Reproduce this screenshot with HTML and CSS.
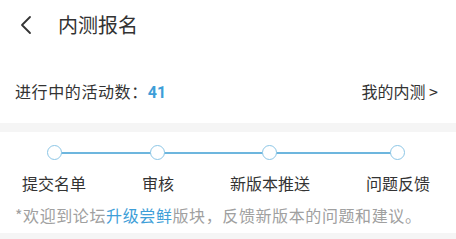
FILE: index.html
```html
<!DOCTYPE html>
<html lang="zh-CN">
<head>
    <meta charset="UTF-8">
    <meta name="viewport" content="width=device-width, initial-scale=1.0">
    <title>内测报名</title>
    <link rel="stylesheet" href="styles.css">
</head>
<body>
    <div class="page">
        <div class="top-bar">
            <svg class="back-icon" width="14" height="20" viewBox="0 0 14 20">
                <path d="M11 2 L3 10 L11 18" fill="none" stroke="#333" stroke-width="1.8" stroke-linecap="round" stroke-linejoin="round"/>
            </svg>
            <h1>内测报名</h1>
        </div>

        <div class="stats-row">
            <span class="stats-label">进行中的活动数：<b class="stats-count">41</b></span>
            <span class="my-tests">我的内测 &gt;</span>
        </div>

        <div class="divider"></div>

        <div class="steps-panel">
            <div class="steps">
                <div class="step">
                    <span class="step-dot"></span>
                    <span class="step-name">提交名单</span>
                </div>
                <div class="step">
                    <span class="step-dot"></span>
                    <span class="step-name">审核</span>
                </div>
                <div class="step">
                    <span class="step-dot"></span>
                    <span class="step-name">新版本推送</span>
                </div>
                <div class="step">
                    <span class="step-dot"></span>
                    <span class="step-name">问题反馈</span>
                </div>
            </div>
            <p class="note">*欢迎到论坛<span class="highlight">升级尝鲜</span>版块，反馈新版本的问题和建议。</p>
        </div>

        <div class="divider"></div>
    </div>
</body>
</html>
```

FILE: styles.css
```css
:root {
    --text-main: #333333;
    --text-muted: #a0a0a0;
    --accent: #3e9ed8;
    --line: #6db6de;
    --band: #f5f5f5;
}

* {
    margin: 0;
    padding: 0;
    box-sizing: border-box;
}

body {
    background-color: #ffffff;
    color: var(--text-main);
    font-family: "Noto Sans CJK SC", "Noto Sans", sans-serif;
}

.page {
    width: 456px;
}

.top-bar {
    height: 50px;
    display: flex;
    align-items: center;
    padding-left: 19px;
}

.back-icon {
    display: block;
}

.top-bar h1 {
    margin-left: 25px;
    font-size: 20px;
    font-weight: 400;
    line-height: 24px;
}

.stats-row {
    display: flex;
    justify-content: space-between;
    padding: 30px 18px 19px 15px;
    font-size: 16px;
    line-height: 22px;
}

.stats-label {
    letter-spacing: 0.6px;
}

.stats-count {
    color: var(--accent);
    font-weight: 700;
    font-family: "Roboto", "Noto Sans", sans-serif;
    letter-spacing: 0;
}

.divider {
    height: 9px;
    background-color: var(--band);
}

.steps-panel {
    padding: 14px 0 8px;
}

.steps {
    position: relative;
    display: flex;
    justify-content: space-between;
    padding: 0 26px 0 22px;
}

.steps::before {
    content: "";
    position: absolute;
    top: 6px;
    left: 54px;
    right: 58px;
    height: 2px;
    background-color: var(--line);
}

.step {
    position: relative;
    display: flex;
    flex-direction: column;
    align-items: center;
}

.step-dot {
    width: 15px;
    height: 15px;
    margin-top: -1px;
    border: 1.5px solid #8cc6e6;
    border-radius: 50%;
    background-color: #ffffff;
}

.step-name {
    margin-top: 12px;
    font-size: 16px;
    line-height: 22px;
}

.note {
    margin-top: 11px;
    padding-left: 15px;
    font-size: 16px;
    line-height: 20px;
    letter-spacing: 0.6px;
    color: var(--text-muted);
}

.highlight {
    color: var(--accent);
}
```
